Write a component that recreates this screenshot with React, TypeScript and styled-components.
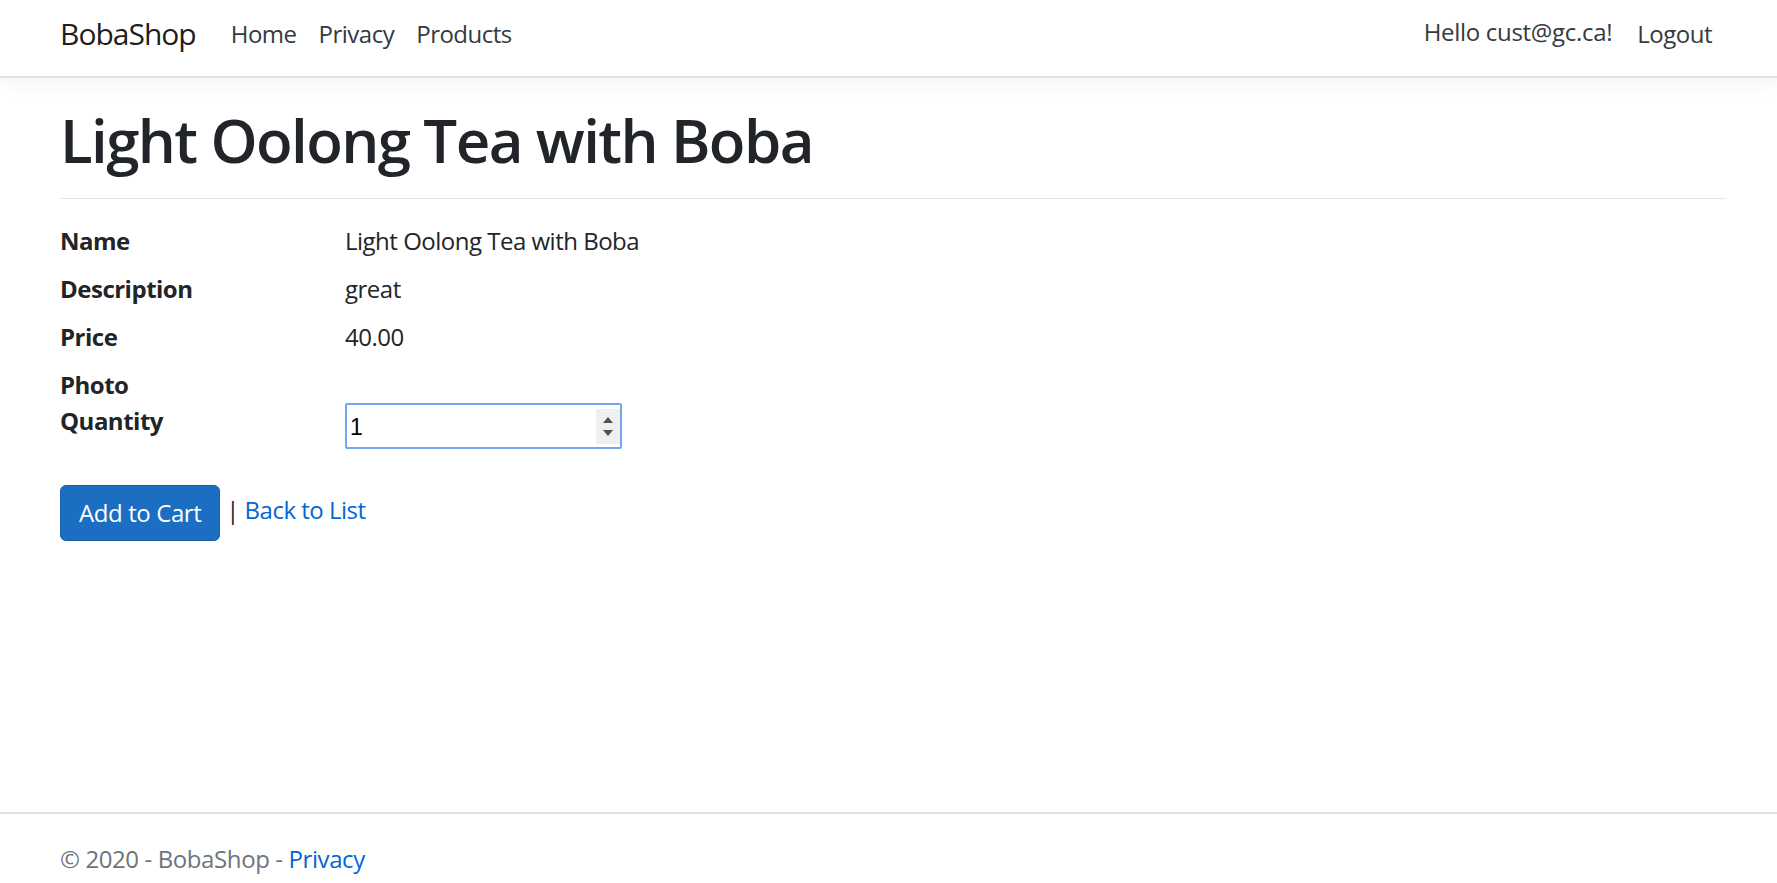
import styled, { createGlobalStyle } from "styled-components";

const GlobalStyle = createGlobalStyle`
  html, body {
    margin: 0;
    padding: 0;
    overflow: hidden;
  }
  body {
    font-family: "Open Sans", "Noto Sans", sans-serif;
    font-size: 24px;
    line-height: 1.5;
    letter-spacing: -0.5px;
    color: #212529;
    background: #fff;
  }
  * {
    box-sizing: border-box;
  }
`;

const Page = styled.div`
  display: flex;
  flex-direction: column;
  height: 100vh;
`;

const Navbar = styled.header`
  flex-shrink: 0;
  height: 78px;
  display: flex;
  align-items: center;
  padding: 0 54px 9px 60px;
  background: #fff;
  border-bottom: 2px solid #dee2e6;
  box-shadow: 0 6px 18px rgba(0, 0, 0, 0.05);
`;

const Brand = styled.a`
  font-size: 30px;
  line-height: 45px;
  letter-spacing: -1px;
  color: rgba(0, 0, 0, 0.9);
  text-decoration: none;
  margin-right: 24px;
`;

const NavList = styled.nav`
  display: flex;
  flex: 1;
  align-items: center;
`;

const NavLink = styled.a<{ $lift?: boolean }>`
  padding: 0 11px;
  color: #343a40;
  text-decoration: none;
  line-height: 36px;
  position: relative;
  top: ${(p) => (p.$lift ? "-2px" : "0")};
`;

const Greeting = styled(NavLink)`
  letter-spacing: -0.3px;
  margin-right: 3px;
`;

const UserNav = styled.div`
  display: flex;
  align-items: center;
`;

const Main = styled.main`
  flex: 1;
  padding: 24px 52px 0 60px;
`;

const Title = styled.h1`
  margin: 0;
  padding-top: 4px;
  font-size: 60px;
  font-weight: 600;
  line-height: 68px;
  letter-spacing: -1.6px;
`;

const Rule = styled.hr`
  margin: 24px 0 0;
  border: 0;
  border-top: 1.5px solid rgba(0, 0, 0, 0.1);
`;

const Details = styled.dl`
  display: grid;
  grid-template-columns: 262.5px 1fr;
  column-gap: 22.5px;
  margin: 24px 0 24px;
`;

const Term = styled.dt`
  font-weight: 700;
  line-height: 36px;
`;

const Value = styled.dd`
  margin: 0 0 12px;
  line-height: 36px;
`;

const SpinWrap = styled.div`
  position: relative;
  width: 277px;
  height: 46px;
`;

const QtyInput = styled.input`
  width: 100%;
  height: 100%;
  padding: 2px 3px 0;
  border: 2px solid #75a4f0;
  border-radius: 2px;
  outline: none;
  font-family: "Liberation Sans", Arial, sans-serif;
  font-size: 23px;
  letter-spacing: 0;
  color: #000;
  -moz-appearance: textfield;
  &::-webkit-inner-spin-button,
  &::-webkit-outer-spin-button {
    -webkit-appearance: none;
    margin: 0;
  }
`;

const Spinner = styled.div`
  position: absolute;
  top: 6px;
  right: 2px;
  width: 24px;
  height: 35px;
  background: #efefef;
  display: flex;
  flex-direction: column;
  align-items: center;
  justify-content: center;
  gap: 7px;
  pointer-events: none;
`;

const Arrow = styled.span<{ $down?: boolean }>`
  width: 0;
  height: 0;
  border-left: 5px solid transparent;
  border-right: 5px solid transparent;
  ${(p) =>
    p.$down
      ? "border-top: 6px solid #505050;"
      : "border-bottom: 6px solid #505050;"}
`;

const Actions = styled.div`
  line-height: 36px;
`;

const PrimaryButton = styled.button`
  display: inline-block;
  vertical-align: middle;
  padding: 9px 18px;
  font-family: inherit;
  font-size: 24px;
  letter-spacing: -0.4px;
  line-height: 36px;
  color: #fff;
  background: #1b6ec2;
  border: 1px solid #1861ac;
  border-radius: 6px;
  cursor: pointer;
`;

const Link = styled.a`
  color: #0366d6;
  text-decoration: none;
`;

const Footer = styled.footer`
  flex-shrink: 0;
  height: 71px;
  overflow: hidden;
  border-top: 2px solid #dee2e6;
  padding: 0 52px 0 60px;
  line-height: 90px;
  letter-spacing: -0.4px;
  color: #6c757d;
  white-space: nowrap;
`;

const App = () => {
  return (
    <>
      <GlobalStyle />
      <Page>
        <Navbar>
          <Brand href="#">BobaShop</Brand>
          <NavList>
            <NavLink href="#">Home</NavLink>
            <NavLink href="#">Privacy</NavLink>
            <NavLink href="#">Products</NavLink>
          </NavList>
          <UserNav>
            <Greeting $lift href="#">
              Hello cust@gc.ca!
            </Greeting>
            <NavLink href="#">Logout</NavLink>
          </UserNav>
        </Navbar>
        <Main>
          <Title>Light Oolong Tea with Boba</Title>
          <Rule />
          <Details>
            <Term>Name</Term>
            <Value>Light Oolong Tea with Boba</Value>
            <Term>Description</Term>
            <Value>great</Value>
            <Term>Price</Term>
            <Value>40.00</Value>
            <Term>Photo</Term>
            <Value></Value>
            <Term>Quantity</Term>
            <Value>
              <SpinWrap>
                <QtyInput type="number" defaultValue={1} min={1} />
                <Spinner>
                  <Arrow />
                  <Arrow $down />
                </Spinner>
              </SpinWrap>
            </Value>
          </Details>
          <Actions>
            <PrimaryButton type="button">Add to Cart</PrimaryButton> |{" "}
            <Link href="#">Back to List</Link>
          </Actions>
        </Main>
        <Footer>
          &copy; 2020 - BobaShop - <Link href="#">Privacy</Link>
        </Footer>
      </Page>
    </>
  );
};

export default App;
